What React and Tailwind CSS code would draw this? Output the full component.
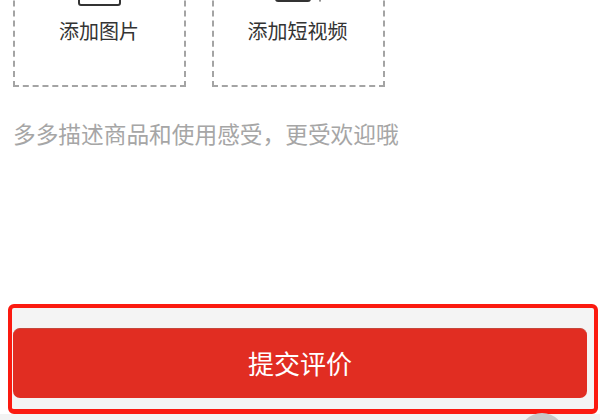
export default function App() {
  return (
    <div className="relative h-[420px] w-[600px] overflow-hidden bg-white font-['Noto_Sans_CJK_SC',sans-serif]">
      <div className="-mt-[60px] flex gap-[26px] pl-[13px]">
        <div className="flex h-[147px] w-[173px] flex-col items-center border-2 border-dashed border-[#a4a4a4] pt-[30px]">
          <div className="h-[34px] w-[43px] rounded-[3px] border-2 border-[#333]" />
          <span className="mt-[11px] -ml-px text-[20px] leading-[28px] text-[#333]">添加图片</span>
        </div>
        <div className="flex h-[147px] w-[173px] flex-col items-center border-2 border-dashed border-[#a4a4a4] pt-[30px]">
          <svg width="47" height="34" viewBox="0 0 47 34" fill="#333">
            <rect x="0" y="0" width="36" height="30" rx="3" />
            <path d="M43 0h4l-1.5 29.5a1 1 0 0 1-1 0z" />
          </svg>
          <span className="mt-[11px] -ml-[2px] text-[20px] leading-[28px] text-[#333]">添加短视频</span>
        </div>
      </div>
      <p className="mt-[32px] pl-[13px] text-[22.7px] leading-[30px] text-[#a6a6a6]">多多描述商品和使用感受，更受欢迎哦</p>
      <div className="mt-[155px] ml-[8px] h-[110px] w-[590px] rounded-[6px] border-[4px] border-b-[5px] border-[#fb1a10] bg-[#f4f4f4] pt-[20px]">
        <button className="ml-px flex h-[70px] w-[574px] items-center justify-center rounded-[7px] border-t border-[#c4483c] bg-[#e12d22] pb-[2px] text-[26px] text-white">
          提交评价
        </button>
      </div>
      <div className="h-[6px] bg-[#f2f2f2]" />
      <div className="absolute left-[519px] top-[413px] h-[46px] w-[46px] rounded-full bg-[#c8c8c8]" />
    </div>
  );
}
